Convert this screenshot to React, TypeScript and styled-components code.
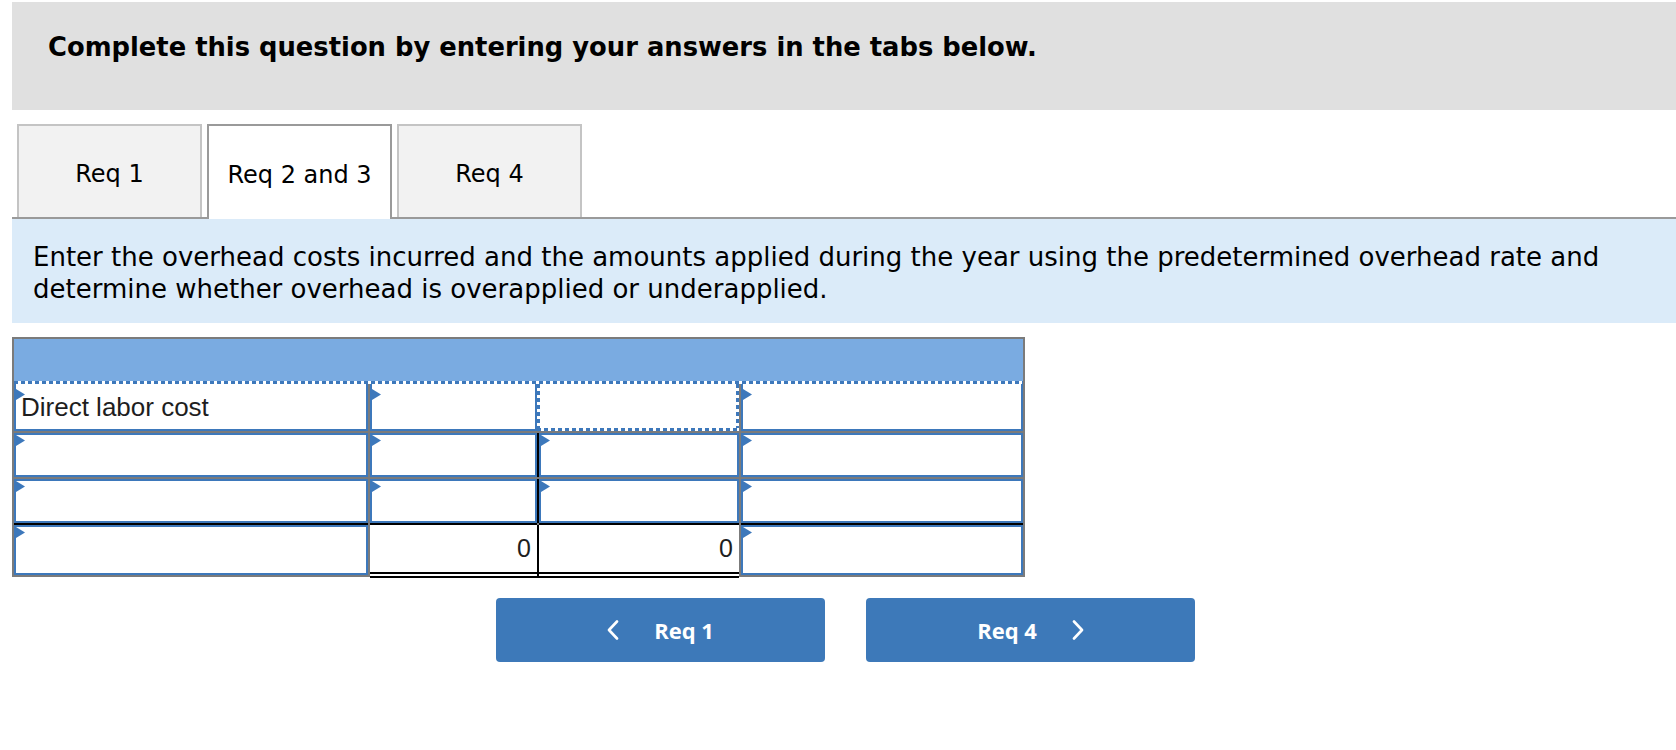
import React from "react";
import styled, { createGlobalStyle } from "styled-components";

const colors = {
  banner: "#e0e0e0",
  tabIdle: "#f2f2f2",
  tabIdleBorder: "#c4c4c4",
  tabActiveBorder: "#9a9a9a",
  hint: "#dbebf9",
  head: "#7aabe1",
  input: "#3d78bb",
  grid: "#7b7b7b",
  button: "#3d79b9",
  white: "#ffffff",
  black: "#000000",
};

const dots = (angle: number) =>
  `repeating-linear-gradient(${angle}deg, ${colors.input} 0 4px, ${colors.white} 4px 7px)`;

const GlobalStyle = createGlobalStyle`
  html, body {
    margin: 0;
    padding: 0;
    background: ${colors.white};
  }
  body {
    font-family: "DejaVu Sans", Verdana, sans-serif;
    color: ${colors.black};
  }
  * {
    box-sizing: border-box;
  }
`;

const Page = styled.div`
  width: 1676px;
  padding: 2px 0 0 12px;
`;

const Banner = styled.div`
  height: 108px;
  padding: 30px 0 0 36px;
  background: ${colors.banner};
  font-size: 25.8px;
  font-weight: bold;
`;

const TabStrip = styled.div`
  display: flex;
  align-items: flex-start;
  gap: 5px;
  height: 95px;
  margin-top: 14px;
  padding-left: 5px;
  border-bottom: 2px solid ${colors.tabActiveBorder};
`;

const Tab = styled.div<{ $active?: boolean }>`
  display: flex;
  align-items: center;
  justify-content: center;
  width: 185px;
  height: ${({ $active }) => ($active ? "95px" : "93px")};
  padding-top: 4px;
  border: 2px solid
    ${({ $active }) => ($active ? colors.tabActiveBorder : colors.tabIdleBorder)};
  border-bottom: none;
  background: ${({ $active }) => ($active ? colors.white : colors.tabIdle)};
  font-size: 24px;
  position: relative;
`;

const Hint = styled.div`
  padding: 22px 20px 18px 21px;
  background: ${colors.hint};
  font-size: 26px;
  line-height: 32px;
`;

const TableFrame = styled.div`
  width: 1013px;
  margin-top: 14px;
  border: 2px solid ${colors.grid};
`;

const HeadBar = styled.div`
  height: 45px;
  background: ${dots(90)} bottom / 100% 3px no-repeat, ${colors.head};
`;

const Grid = styled.div`
  display: grid;
  grid-template-columns: 354px 167px 200px 282px;
  grid-template-rows: 47px 44px 44px 50px;
  gap: 2px;
  background: ${colors.grid};
`;

interface CellProps {
  $top?: boolean;
  $rule?: boolean;
  $totalRow?: boolean;
}

const shadows = ({ $rule, $totalRow }: CellProps) => {
  const list: string[] = [];
  if ($rule) list.push(`2px 0 0 ${colors.black}`);
  if ($totalRow) list.push(`0 -2px 0 ${colors.black}`);
  return list.length ? list.join(", ") : "none";
};

const InputCell = styled.div<CellProps>`
  position: relative;
  display: flex;
  align-items: center;
  padding-left: 5px;
  background: ${colors.white};
  border: 2px solid ${colors.input};
  border-top-width: ${({ $top }) => ($top ? 0 : "2px")};
  box-shadow: ${shadows};
  font-family: "Liberation Sans", Arial, sans-serif;
  font-size: 26px;
  line-height: 28px;
  color: #1e1e1e;

  &::before {
    content: "";
    position: absolute;
    left: 0;
    top: ${({ $top }) => ($top ? "5px" : "0")};
    width: 9px;
    height: 11px;
    background: ${colors.input};
    clip-path: polygon(0 0, 100% 50%, 0 100%);
  }
`;

const FocusCell = styled.div`
  margin-left: -2px;
  background:
    ${dots(90)} bottom / 100% 3px no-repeat,
    ${dots(180)} left top / 3px 100% no-repeat,
    ${dots(180)} right top / 3px 100% no-repeat,
    ${colors.white};
`;

const TotalCell = styled.div<CellProps>`
  display: flex;
  align-items: center;
  justify-content: flex-end;
  margin-bottom: -3px;
  padding-right: 6px;
  background: ${colors.white};
  border-bottom: 6px double ${colors.black};
  box-shadow: ${shadows};
  font-family: "Liberation Sans", Arial, sans-serif;
  font-size: 25px;
  color: #1e1e1e;
`;

const ButtonRow = styled.div`
  display: flex;
  justify-content: center;
  gap: 41px;
  margin-top: 21px;
  padding-left: 3px;
`;

const NavButton = styled.button`
  display: flex;
  align-items: center;
  justify-content: center;
  gap: 35px;
  width: 329px;
  height: 64px;
  padding: 0;
  border: none;
  border-radius: 4px;
  background: ${colors.button};
  color: ${colors.white};
  font-family: "Open Sans", Roboto, sans-serif;
  font-size: 22px;
  font-weight: 700;
  cursor: pointer;
`;

const Chevron = ({ dir }: { dir: "left" | "right" }) => (
  <svg width="12" height="20" viewBox="0 0 12 20" fill="none">
    <polyline
      points={dir === "left" ? "10,1.5 2,10 10,18.5" : "2,1.5 10,10 2,18.5"}
      stroke="#fff"
      strokeWidth="2.6"
      strokeLinecap="round"
      strokeLinejoin="round"
    />
  </svg>
);

const App = () => {
  return (
    <Page>
      <GlobalStyle />
      <Banner>Complete this question by entering your answers in the tabs below.</Banner>

      <TabStrip>
        <Tab>Req 1</Tab>
        <Tab $active>Req 2 and 3</Tab>
        <Tab>Req 4</Tab>
      </TabStrip>

      <Hint>
        Enter the overhead costs incurred and the amounts applied during the year using the
        predetermined overhead rate and determine whether overhead is overapplied or
        underapplied.
      </Hint>

      <TableFrame>
        <HeadBar />
        <Grid>
          <InputCell $top>Direct labor cost</InputCell>
          <InputCell $top />
          <FocusCell />
          <InputCell $top />

          <InputCell />
          <InputCell $rule />
          <InputCell />
          <InputCell />

          <InputCell />
          <InputCell $rule />
          <InputCell />
          <InputCell />

          <InputCell $totalRow />
          <TotalCell $totalRow $rule>0</TotalCell>
          <TotalCell $totalRow>0</TotalCell>
          <InputCell $totalRow />
        </Grid>
      </TableFrame>

      <ButtonRow>
        <NavButton>
          <Chevron dir="left" />
          <span>Req 1</span>
        </NavButton>
        <NavButton>
          <span>Req 4</span>
          <Chevron dir="right" />
        </NavButton>
      </ButtonRow>
    </Page>
  );
};

export default App;
